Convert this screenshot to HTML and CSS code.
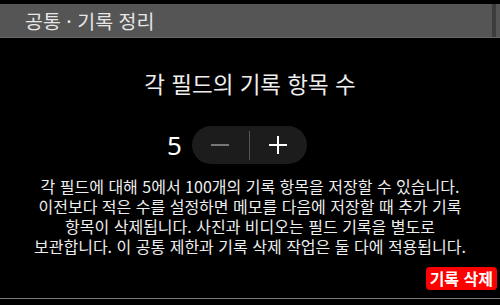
FILE: index.html
```html
<!DOCTYPE html>
<html lang="ko">
<head>
    <meta charset="UTF-8">
    <meta name="viewport" content="width=device-width, initial-scale=1.0">
    <title>공통 · 기록 정리</title>
    <link rel="stylesheet" href="styles.css">
</head>
<body>
    <div class="titlebar">
        <div class="title">공통 · 기록 정리</div>
        <div class="edge"></div>
    </div>
    <div class="content">
        <h1>각 필드의 기록 항목 수</h1>
        <div class="stepper-row">
            <span class="count">5</span>
            <div class="stepper">
                <button class="step minus">
                    <svg width="18" height="18" viewBox="0 0 18 18"><line x1="0" y1="9" x2="18" y2="9" stroke="#777" stroke-width="2"/></svg>
                </button>
                <div class="divider"></div>
                <button class="step plus">
                    <svg width="18" height="18" viewBox="0 0 18 18"><line x1="0" y1="9" x2="18" y2="9" stroke="#fff" stroke-width="2"/><line x1="9" y1="0" x2="9" y2="18" stroke="#fff" stroke-width="2"/></svg>
                </button>
            </div>
        </div>
        <p class="info">각 필드에 대해 5에서 100개의 기록 항목을 저장할 수 있습니다. 이전보다 적은 수를 설정하면 메모를 다음에 저장할 때 추가 기록 항목이 삭제됩니다. 사진과 비디오는 필드 기록을 별도로 보관합니다. 이 공통 제한과 기록 삭제 작업은 둘 다에 적용됩니다.</p>
        <div class="actions">
            <button class="btn delete">기록 삭제</button>
        </div>
    </div>
    <div class="bottom-line"></div>
</body>
</html>
```

FILE: styles.css
```css
body {
    margin: 0;
    padding: 0;
    background: #000;
    color: #fff;
    font-family: "Noto Sans CJK KR", "Noto Sans", sans-serif;
    width: 500px;
    height: 305px;
    overflow: hidden;
    display: flex;
    flex-direction: column;
}
.titlebar {
    margin-top: 4px;
    height: 33px;
    flex-shrink: 0;
    background: #555;
    display: flex;
    align-items: center;
    border-bottom: 1px solid #666;
}
.title {
    flex: 1;
    padding-left: 25px;
    font-size: 19.5px;
    color: #e6e6e6;
    line-height: 33px;
}
.edge {
    width: 4px;
    height: 100%;
    background: #3c3c3c;
    margin-right: 4px;
}
.content {
    flex: 1;
    display: flex;
    flex-direction: column;
    align-items: center;
}
h1 {
    margin: 30px 0 0;
    font-size: 22.5px;
    font-weight: normal;
    line-height: 30px;
    color: #eee;
}
.stepper-row {
    margin-top: 28px;
    display: flex;
    align-items: center;
    gap: 10px;
    margin-left: -26px;
}
.count {
    font-size: 26px;
    font-family: "Noto Sans", sans-serif;
    line-height: 38px;
}
.stepper {
    width: 115px;
    height: 38px;
    border-radius: 19px;
    background: #1c1c1c;
    display: flex;
    align-items: center;
}
.step {
    flex: 1;
    background: none;
    border: none;
    padding: 0;
    height: 38px;
    display: flex;
    align-items: center;
    justify-content: center;
}
.divider {
    width: 1px;
    height: 29px;
    background: #555;
}
.info {
    margin: 12px 0 0;
    width: 440px;
    text-align: center;
    font-size: 16px;
    line-height: 20px;
    color: #eee;
    word-break: keep-all;
}
.actions {
    align-self: stretch;
    display: flex;
    justify-content: flex-end;
    padding-right: 3px;
    margin-top: 11px;
}
.btn {
    border: none;
    border-radius: 4px;
    font-family: "Noto Sans CJK KR", sans-serif;
    cursor: pointer;
}
.btn.delete {
    background: #f00;
    color: #fff;
    font-size: 16px;
    font-weight: bold;
    padding: 0 4px;
    height: 23px;
    line-height: 23px;
}
.bottom-line {
    height: 1px;
    flex-shrink: 0;
    background: #777;
    margin-bottom: 6px;
}
```
